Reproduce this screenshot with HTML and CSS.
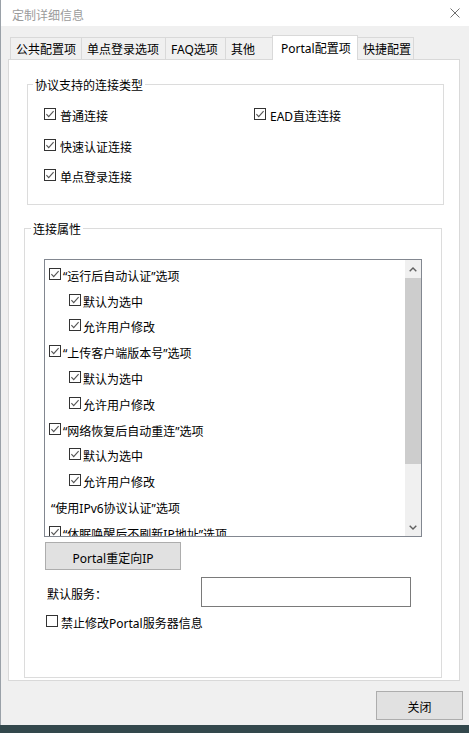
FILE: index.html
```html
<!DOCTYPE html>
<html lang="zh-CN">
<head>
<meta charset="utf-8">
<title>定制详细信息</title>
<link rel="stylesheet" href="styles.css">
</head>
<body>
<svg class="sprite" aria-hidden="true">
  <symbol id="cb-on" viewBox="0 0 12 12">
    <rect x="0.5" y="0.5" width="11" height="11" fill="#fff" stroke="#333"/>
    <path d="M2.4 6.1 L4.7 8.6 L9.6 3.1" fill="none" stroke="#555" stroke-width="1.1"/>
  </symbol>
  <symbol id="cb-off" viewBox="0 0 12 12">
    <rect x="0.5" y="0.5" width="11" height="11" fill="#fff" stroke="#333"/>
  </symbol>
</svg>
<div class="window">
  <div class="titlebar">
    <span class="title">定制详细信息</span>
    <svg class="close" viewBox="0 0 10 10"><path d="M0.5 0.5 L9.5 9.5 M9.5 0.5 L0.5 9.5" stroke="#707070" stroke-width="1"/></svg>
  </div>
  <div class="client">
    <div class="tabs">
      <div class="tab">公共配置项</div>
      <div class="tab">单点登录选项</div>
      <div class="tab">FAQ选项</div>
      <div class="tab">其他</div>
      <div class="tab tab-active">Portal配置项</div>
      <div class="tab">快捷配置</div>
    </div>
    <div class="panel">
      <div class="group group-types">
        <div class="group-title">协议支持的连接类型</div>
        <div class="type-grid">
          <div class="check"><svg class="cb"><use href="#cb-on"/></svg><span class="lbl">普通连接</span></div>
          <div class="check"><svg class="cb"><use href="#cb-on"/></svg><span class="lbl">快速认证连接</span></div>
          <div class="check"><svg class="cb"><use href="#cb-on"/></svg><span class="lbl">单点登录连接</span></div>
          <div class="check"><svg class="cb"><use href="#cb-on"/></svg><span class="lbl">EAD直连连接</span></div>
        </div>
      </div>
      <div class="group group-props">
        <div class="group-title">连接属性</div>
        <div class="listbox">
          <div class="list">
            <div class="item"><svg class="cb"><use href="#cb-on"/></svg><span class="lbl">“运行后自动认证”选项</span></div>
            <div class="item item-sub"><svg class="cb"><use href="#cb-on"/></svg><span class="lbl">默认为选中</span></div>
            <div class="item item-sub"><svg class="cb"><use href="#cb-on"/></svg><span class="lbl">允许用户修改</span></div>
            <div class="item"><svg class="cb"><use href="#cb-on"/></svg><span class="lbl">“上传客户端版本号”选项</span></div>
            <div class="item item-sub"><svg class="cb"><use href="#cb-on"/></svg><span class="lbl">默认为选中</span></div>
            <div class="item item-sub"><svg class="cb"><use href="#cb-on"/></svg><span class="lbl">允许用户修改</span></div>
            <div class="item"><svg class="cb"><use href="#cb-on"/></svg><span class="lbl">“网络恢复后自动重连”选项</span></div>
            <div class="item item-sub"><svg class="cb"><use href="#cb-on"/></svg><span class="lbl">默认为选中</span></div>
            <div class="item item-sub"><svg class="cb"><use href="#cb-on"/></svg><span class="lbl">允许用户修改</span></div>
            <div class="item item-plain"><span class="lbl">“使用IPv6协议认证”选项</span></div>
            <div class="item"><svg class="cb"><use href="#cb-on"/></svg><span class="lbl">“休眠唤醒后不刷新IP地址”选项</span></div>
          </div>
          <div class="scrollbar">
            <div class="sb-btn"><svg class="chev" viewBox="0 0 8 5"><path d="M0.7 4.3 L4 1 L7.3 4.3" fill="none" stroke="#606060" stroke-width="1.4"/></svg></div>
            <div class="sb-thumb"></div>
            <div class="sb-track"></div>
            <div class="sb-btn"><svg class="chev" viewBox="0 0 8 5"><path d="M0.7 0.7 L4 4 L7.3 0.7" fill="none" stroke="#606060" stroke-width="1.4"/></svg></div>
          </div>
        </div>
        <button class="btn btn-portal" type="button">Portal重定向IP</button>
        <div class="service">
          <span class="lbl">默认服务：</span>
          <div class="input"></div>
        </div>
        <div class="check lock"><svg class="cb"><use href="#cb-off"/></svg><span class="lbl">禁止修改Portal服务器信息</span></div>
      </div>
    </div>
    <div class="footer">
      <button class="btn btn-close" type="button">关闭</button>
    </div>
  </div>
</div>
</body>
</html>
```
FILE: styles.css
```css
* {
  box-sizing: border-box;
}

html,
body {
  margin: 0;
}

body {
  width: 469px;
  height: 733px;
  overflow: hidden;
  background: linear-gradient(#7c848b 0, #7c848b 2px, #33484c 2px);
  font-family: "Noto Sans", "Noto Sans CJK SC", sans-serif;
  font-size: 12px;
  color: #000;
}

.sprite {
  display: block;
  width: 0;
  height: 0;
  overflow: hidden;
}

.window {
  height: 725px;
  background: #f0f0f0;
  border-left: 1px solid #9aa1a8;
  display: flex;
  flex-direction: column;
}

.titlebar {
  height: 26px;
  flex: none;
  background: #fff;
  display: flex;
  align-items: center;
  justify-content: space-between;
  padding: 0 9px 0 11px;
}

.title {
  color: #9b9b9b;
  line-height: 17px;
  padding-top: 4px;
}

.close {
  width: 10px;
  height: 10px;
}

.client {
  padding: 9px 6px 0 7px;
  display: flex;
  flex-direction: column;
}

/* tabs */
.tabs {
  display: grid;
  grid-template-columns: 71px 84px 60px 47px 85px 56px;
  height: 24px;
  margin-left: 2px;
  align-items: start;
}

.tab {
  height: 22px;
  margin-top: 2px;
  margin-right: -1px;
  border: 1px solid #d9d9d9;
  border-bottom: 0;
  background: #f0f0f0;
  padding: 3px 0 0 5px;
  line-height: 17px;
  white-space: nowrap;
}

.tab-active {
  height: 25px;
  margin-top: 0;
  background: #fff;
  position: relative;
  z-index: 1;
  padding-top: 4px;
  padding-left: 8px;
}

.panel {
  width: 452px;
  height: 622px;
  background: #fff;
  border: 1px solid #d9d9d9;
}

/* group boxes */
.group {
  border: 1px solid #dcdcdc;
}

.group-types {
  margin: 24px 0 0 18px;
  width: 417px;
  height: 121px;
}

.group-props {
  margin: 23px 0 0 15px;
  width: 418px;
  height: 450px;
}

.group-title {
  margin: -10px 0 0 5px;
  padding: 2px 2px 0;
  width: max-content;
  background: #fff;
  line-height: 17px;
}

.group-props .group-title {
  margin-left: 6px;
}

.type-grid {
  display: grid;
  grid-template-columns: 210px 1fr;
  grid-template-rows: repeat(3, 30.5px);
  grid-auto-flow: column;
  margin: 5px 0 0 16px;
}

.check {
  display: flex;
  align-items: center;
  gap: 4px;
  white-space: nowrap;
}

.lbl {
  line-height: 17px;
  padding-top: 5px;
}

.cb {
  width: 12px;
  height: 12px;
  flex: none;
}

/* list box */
.listbox {
  margin: 21px 0 0 19px;
  width: 378px;
  height: 278px;
  border: 1px solid #828790;
  background: #fff;
  display: flex;
}

.list {
  flex: 1;
  overflow: hidden;
  padding-top: 1px;
}

.item {
  height: 25.8px;
  display: flex;
  align-items: center;
  gap: 2px;
  padding-left: 4px;
  white-space: nowrap;
}

.item-sub {
  padding-left: 24px;
}

.item-plain {
  padding-left: 6px;
}

.scrollbar {
  width: 16px;
  flex: none;
  display: flex;
  flex-direction: column;
  background: #f0f0f0;
}

.sb-btn {
  height: 18px;
  display: flex;
  align-items: center;
  justify-content: center;
}

.chev {
  width: 8px;
  height: 5px;
}

.sb-thumb {
  height: 186px;
  background: #cdcdcd;
}

.sb-track {
  flex: 1;
}

/* buttons and fields */
.btn {
  display: block;
  padding: 4px 0 0;
  font: inherit;
  color: #000;
  background: #e1e1e1;
  border: 1px solid #adadad;
  border-radius: 0;
  line-height: 17px;
  text-align: center;
}

.btn-portal {
  margin: 5px 0 0 20px;
  width: 136px;
  height: 28px;
}

.service {
  display: grid;
  grid-template-columns: 154px 210px;
  align-items: center;
  margin: 7px 0 0 22px;
  height: 30px;
}

.input {
  height: 30px;
  border: 1px solid #7a7a7a;
  background: #fff;
}

.lock {
  margin: 5px 0 0 21px;
  height: 18px;
  gap: 3px;
}

.footer {
  display: flex;
  justify-content: flex-end;
  padding-top: 10px;
}

.btn-close {
  width: 87px;
  height: 29px;
  padding-top: 3px;
}
```
